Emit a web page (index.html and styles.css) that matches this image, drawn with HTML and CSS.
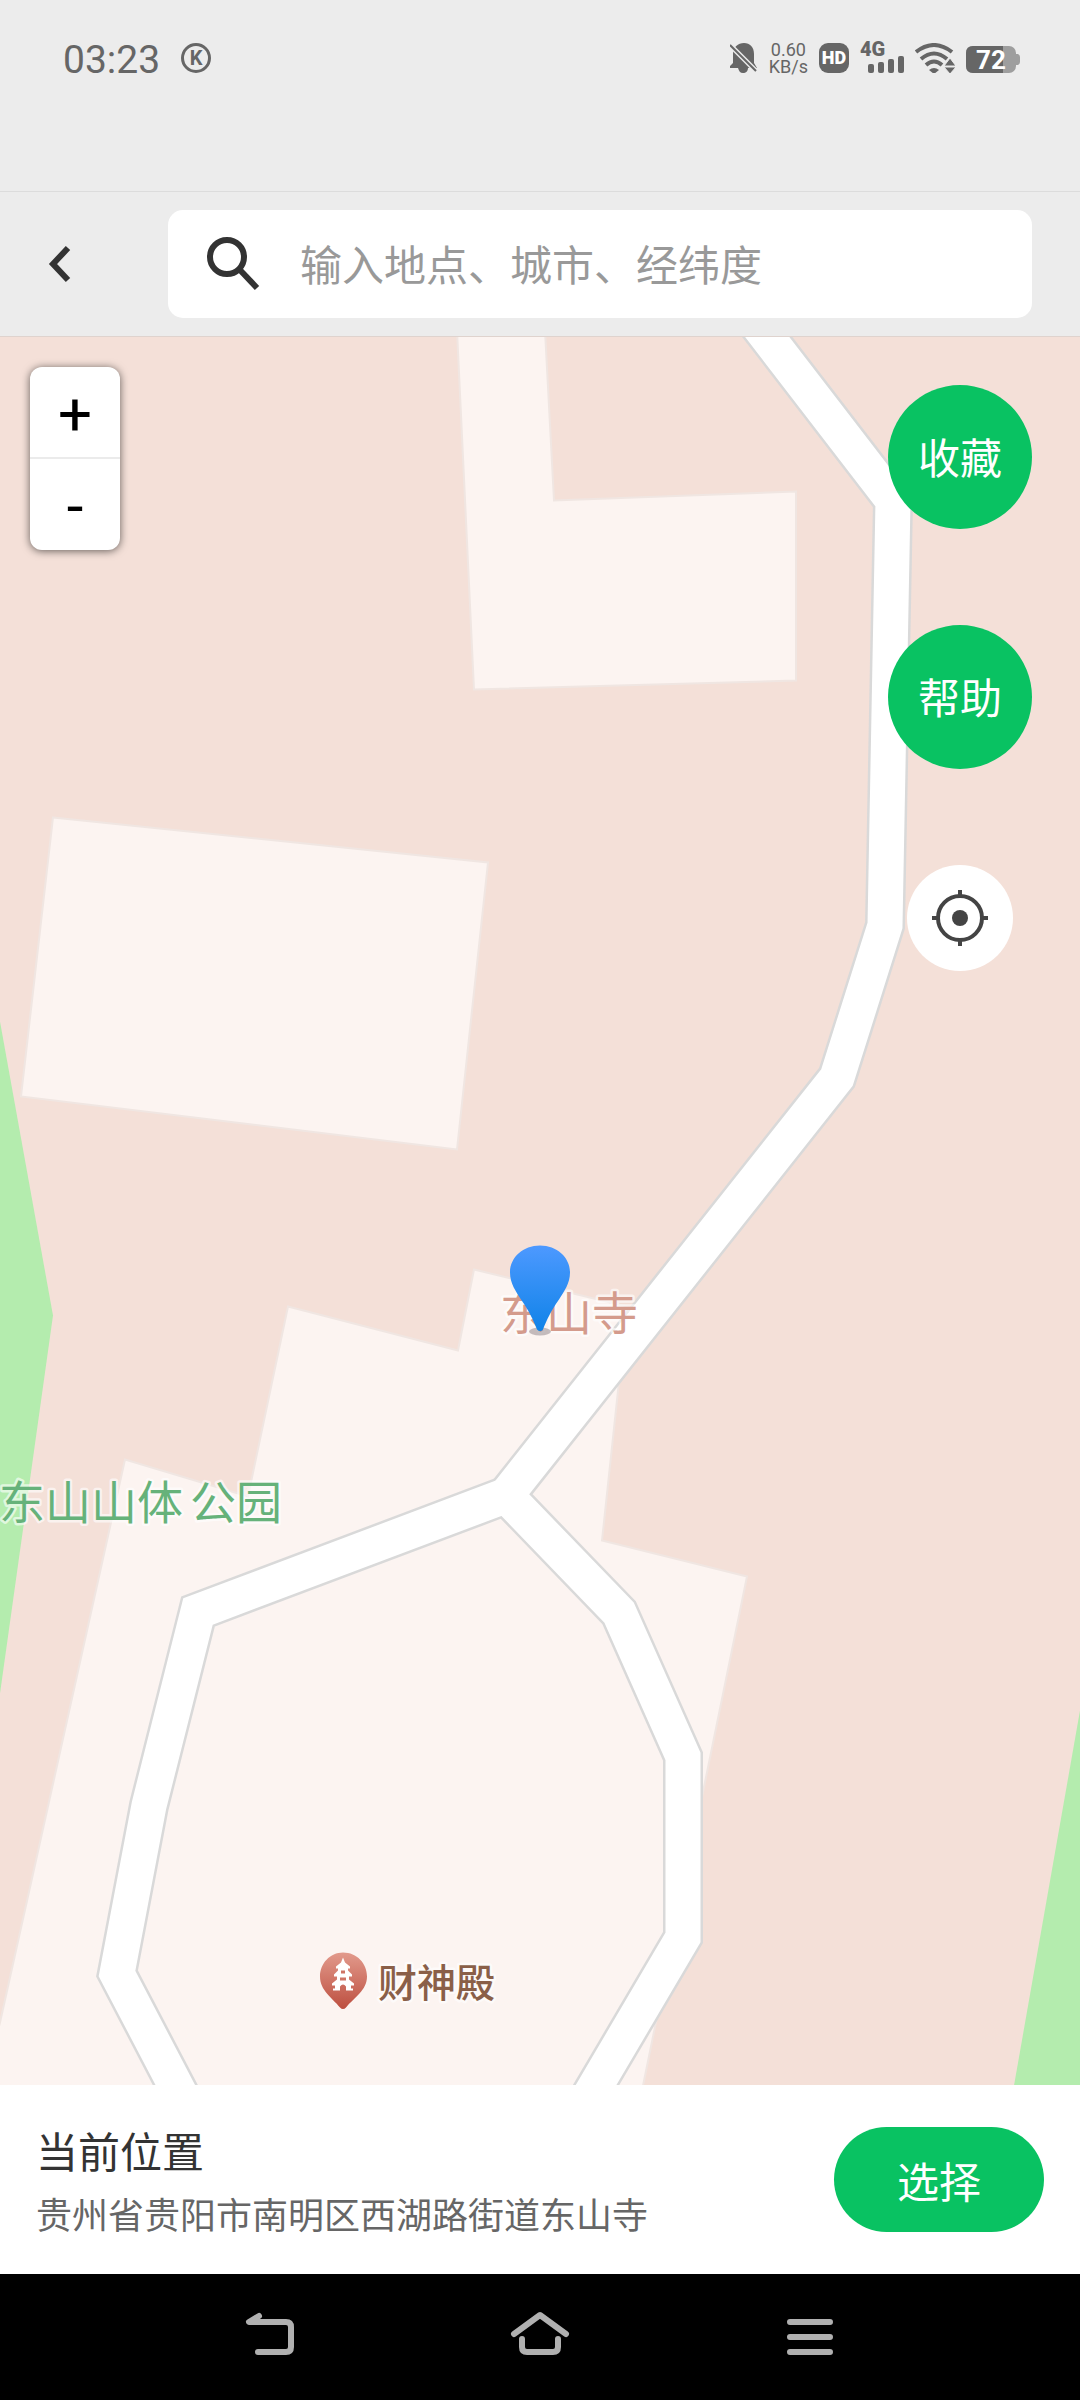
FILE: index.html
```html
<!DOCTYPE html>
<html lang="zh-CN">
<head>
  <meta charset="UTF-8" />
  <meta name="viewport" content="width=device-width, initial-scale=1.0" />
  <title>选择位置</title>
  <link rel="stylesheet" href="styles.css">
</head>
<body>
  <div class="status-bar">
    <span class="clock">03:23</span>
    <span class="app-badge">K</span>
    <div class="status-icons">
      <svg width="28" height="30" viewBox="0 0 28 30">
        <path fill="#666" d="M14 0C20 0 24 4 24 11V20L27 25H18C18 28 16 30 13 30S9 28 8 25H0V23L3 20V11C3 4 8 0 14 0Z"/>
        <path d="M-1 1L27 29" stroke="#ececec" stroke-width="5"/>
        <path d="M0 2L26 28" stroke="#666" stroke-width="2"/>
      </svg>
      <div class="speed"><span>0.60</span><span>KB/s</span></div>
      <span class="hd">HD</span>
      <div class="signal">
        <span>4G</span>
        <svg width="36" height="17" viewBox="0 0 36 17" fill="#666">
          <rect x="0" y="8" width="6" height="9" rx="2"/>
          <rect x="10" y="6" width="6" height="11" rx="2"/>
          <rect x="20" y="3" width="6" height="14" rx="2"/>
          <rect x="30" y="0" width="6" height="17" rx="2"/>
        </svg>
      </div>
      <svg width="40" height="30" viewBox="0 0 40 30">
        <g fill="none" stroke="#666" stroke-width="4">
          <path d="M1 9Q19 -5 37 9"/>
          <path d="M6 16Q19 5 32 16"/>
          <path d="M11 22Q19 15 27 22"/>
        </g>
        <path fill="#666" d="M14 27Q19 23 24 27L19 31Z"/>
        <path fill="#666" stroke="#ececec" stroke-width="1" d="M29 23L35 15L41 23ZM29 24H41L35 31Z"/>
      </svg>
      <div class="battery">
        <svg width="54" height="27" viewBox="0 0 54 27">
          <rect width="50" height="27" rx="7" fill="#9e9e9e"/>
          <path fill="#9e9e9e" d="M50 8H52Q54 9 54 11V16Q54 18 52 19H50Z"/>
          <path fill="#666" d="M7 0H37V27H7Q0 27 0 20V7Q0 0 7 0Z"/>
        </svg>
        <span>72</span>
      </div>
    </div>
  </div>

  <header class="search-bar">
    <button type="button" class="back" aria-label="返回">
      <svg width="24" height="40" viewBox="0 0 24 40"><path d="M20 4L5 20L20 36" fill="none" stroke="#333" stroke-width="6"/></svg>
    </button>
    <label class="search-box">
      <svg width="54" height="54" viewBox="0 0 54 54" fill="none" stroke="#333">
        <circle cx="21" cy="20" r="17" stroke-width="6"/>
        <path d="M34 33L51 51" stroke-width="6"/>
      </svg>
      <input type="text" placeholder="输入地点、城市、经纬度" aria-label="搜索">
    </label>
  </header>

  <main class="map">
    <svg class="map-canvas" viewBox="0 336 1080 1749" preserveAspectRatio="xMidYMid slice">
      <defs>
        <linearGradient id="pinFill" x1="0" y1="0" x2="0" y2="1">
          <stop offset="0" stop-color="#4d99ff"/>
          <stop offset="1" stop-color="#1083e8"/>
        </linearGradient>
        <linearGradient id="poiFill" x1="0" y1="0" x2="0" y2="1">
          <stop offset="0" stop-color="#e29a8c"/>
          <stop offset="1" stop-color="#bd4f40"/>
        </linearGradient>
      </defs>

      <!-- parks -->
      <g fill="#b4ecae">
        <polygon points="0,1021 53,1315 0,1693"/>
        <polygon points="1080,1710 1014,2085 1080,2085"/>
      </g>

      <!-- buildings -->
      <g fill="#fcf4f1" stroke="#f0e6e2" stroke-width="2">
        <polygon points="457,330 474,689 796,680 796,491 554,500 545,330"/>
        <polygon points="53,817 488,862 457,1149 21,1096"/>
        <polygon points="-4,2038 0,2022 125,1459 248,1496 288,1306 458,1350 474,1269 627,1306 602,1540 747,1576 642,2090 -4,2090"/>
      </g>

      <!-- roads -->
      <g fill="none" stroke="#d9d9d9" stroke-width="40">
        <path d="M743 305L893 500L885 925L837 1077L506 1495L619 1612L683 1756V1937L584 2105"/>
        <path d="M506 1495L198 1611L149 1805L117 1973L186 2105"/>
      </g>
      <g fill="none" stroke="#fff" stroke-width="35">
        <path d="M743 305L893 500L885 925L837 1077L506 1495L619 1612L683 1756V1937L584 2105"/>
        <path d="M506 1495L198 1611L149 1805L117 1973L186 2105"/>
      </g>

      <!-- labels -->
      <text class="label temple" x="500" y="1329">东山寺</text>
      <text class="label park" x="-1" y="1518">东山山体<tspan dx="7">公园</tspan></text>
      <text class="label poi" x="378" y="1996">财神殿</text>

      <!-- poi marker -->
      <path fill="url(#poiFill)" d="M343 1952C357 1952 367 1963 367 1976C367 1990 354 1997 346 2007Q343 2010 340 2007C332 1997 320 1990 320 1976C320 1963 330 1952 343 1952Z"/>
      <path fill="#fff" d="M343 1957L345 1962L350 1966V1968H348V1970L352 1974V1976H349V1979L354 1983V1985H351V1988H353V1990H346V1986Q343 1982 340 1986V1990H333V1988H335V1985H332V1983L337 1979V1976H334V1974L338 1970V1968H336V1966L341 1962Z"/>
      <path fill="#cf7465" d="M341 1970H345V1973H341ZM340 1977H346V1980H340Z"/>

      <!-- current position -->
      <ellipse cx="540" cy="1331" rx="11" ry="4" fill="#8b7f85" fill-opacity=".5"/>
      <path fill="url(#pinFill)" d="M540 1245C557 1245 570 1257 570 1272C570 1283 564 1291 559 1299C550 1312 547 1319 543 1329Q540 1332 537 1329C533 1319 530 1312 521 1299C516 1291 510 1283 510 1272C510 1257 523 1245 540 1245Z"/>
    </svg>

    <div class="zoom">
      <button type="button" aria-label="放大">+</button>
      <button type="button" aria-label="缩小">-</button>
    </div>

    <div class="tools">
      <button type="button" class="round">收藏</button>
      <button type="button" class="round">帮助</button>
      <button type="button" class="locate" aria-label="定位">
        <svg width="56" height="56" viewBox="0 0 56 56" fill="none" stroke="#444" stroke-width="4">
          <circle cx="28" cy="28" r="22"/>
          <circle cx="28" cy="28" r="8" fill="#444" stroke="none"/>
          <path d="M28 0V6M28 50V56M0 28H6M50 28H56"/>
        </svg>
      </button>
    </div>
  </main>

  <section class="place">
    <div class="place-text">
      <h2>当前位置</h2>
      <p>贵州省贵阳市南明区西湖路街道东山寺</p>
    </div>
    <button type="button" class="choose">选择</button>
  </section>

  <nav class="nav-bar">
    <button type="button" aria-label="返回">
      <svg width="60" height="48" viewBox="0 0 60 48"><path d="M19 3L9 9H46Q51 9 51 14V34Q51 39 46 39H18"/></svg>
    </button>
    <button type="button" aria-label="主页">
      <svg width="60" height="48" viewBox="0 0 60 48"><path d="M4 21L30 2L56 21M12 26V34Q12 39 17 39H43Q48 39 48 34V26"/></svg>
    </button>
    <button type="button" aria-label="最近任务">
      <svg width="60" height="48" viewBox="0 0 60 48"><path d="M10 9H50M10 24H50M10 39H50"/></svg>
    </button>
  </nav>
</body>
</html>
```
FILE: styles.css
```css
* {
  box-sizing: border-box;
}

body {
  margin: 0;
  min-height: 100vh;
  display: flex;
  flex-direction: column;
  background: #ececec;
  font-family: Roboto, "Noto Sans CJK SC", sans-serif;
  color: #333;
}

button {
  display: flex;
  align-items: center;
  justify-content: center;
  margin: 0;
  padding: 0;
  border: none;
  background: none;
  font-family: inherit;
  cursor: pointer;
}

svg {
  display: block;
}

/* status bar */
.status-bar {
  display: flex;
  align-items: center;
  height: 192px;
  padding: 0 60px 76px 63px;
  border-bottom: 1px solid #dcdcdc;
  color: #666;
}

.clock {
  padding-top: 4px;
  font-size: 39px;
  line-height: 40px;
}

.app-badge {
  display: flex;
  align-items: center;
  justify-content: center;
  width: 30px;
  height: 30px;
  margin-left: 21px;
  border: 3px solid #666;
  border-radius: 50%;
  font-size: 20px;
  font-weight: 700;
  line-height: 20px;
}

.status-icons {
  display: flex;
  align-items: center;
  gap: 11px;
  height: 30px;
  margin-left: auto;
}

.speed {
  display: flex;
  flex-direction: column;
  align-items: center;
  font-size: 18px;
  line-height: 17px;
}

.hd {
  width: 30px;
  height: 30px;
  border-radius: 9px;
  background: #666;
  color: #fff;
  font-size: 18px;
  font-weight: 900;
  line-height: 30px;
  text-align: center;
}

.signal {
  display: flex;
  flex-direction: column;
  width: 44px;
}

.signal span {
  height: 14px;
  font-size: 20px;
  font-weight: 900;
  line-height: 15px;
}

.signal svg {
  align-self: flex-end;
}

.battery {
  position: relative;
  align-self: flex-end;
}

.battery span {
  position: absolute;
  inset: 0 4px 0 0;
  color: #fff;
  font-size: 26px;
  font-weight: 700;
  line-height: 28px;
  text-align: center;
}

/* search */
.search-bar {
  display: flex;
  align-items: center;
  height: 144px;
  padding: 0 48px;
}

.back {
  width: 24px;
  height: 60px;
  margin-right: 96px;
}

.search-box {
  flex: 1;
  display: flex;
  align-items: center;
  height: 108px;
  padding: 0 38px;
  border-radius: 15px;
  background: #fff;
}

.search-box input {
  flex: 1;
  min-width: 0;
  margin-left: 40px;
  padding: 4px 0 0;
  border: none;
  outline: none;
  background: none;
  font-family: inherit;
  font-size: 42px;
  color: #333;
}

.search-box input::placeholder {
  color: #999;
}

/* map */
.map {
  position: relative;
  flex: 1;
  min-height: 700px;
  overflow: hidden;
  border-top: 1px solid #dfd3ce;
  background: #f4e0d8;
}

.map-canvas {
  position: absolute;
  inset: 0;
  width: 100%;
  height: 100%;
}

.label {
  paint-order: stroke;
  stroke: rgba(255, 255, 255, 0.6);
  stroke-width: 5px;
  stroke-linejoin: round;
}

.temple {
  font-size: 46px;
  fill: #d49b8c;
}

.park {
  font-size: 46px;
  fill: #66b27a;
}

.poi {
  font-size: 39px;
  font-weight: 500;
  fill: #8a5f48;
}

.zoom {
  position: absolute;
  top: 30px;
  left: 30px;
  width: 90px;
  border-radius: 12px;
  background: #fff;
  box-shadow: 0 1px 8px rgba(0, 0, 0, 0.6);
}

.zoom button {
  width: 90px;
  height: 90px;
  padding-top: 4px;
  font-size: 60px;
  color: #000;
}

.zoom button + button {
  height: 93px;
  border-top: 2px solid #ebebeb;
}

.tools {
  position: absolute;
  top: 48px;
  right: 48px;
  display: flex;
  flex-direction: column;
  align-items: center;
  gap: 96px;
}

.round {
  width: 144px;
  height: 144px;
  padding-bottom: 4px;
  border-radius: 50%;
  background: #09c262;
  color: #fff;
  font-size: 42px;
}

.locate {
  width: 106px;
  height: 106px;
  border-radius: 50%;
  background: #fff;
}

/* place panel */
.place {
  display: flex;
  align-items: center;
  justify-content: space-between;
  gap: 36px;
  min-height: 189px;
  padding: 0 36px;
  background: #fff;
}

.place-text {
  padding-top: 8px;
}

.place h2 {
  margin: 0;
  font-size: 42px;
  font-weight: 400;
  line-height: 66px;
}

.place p {
  margin: 0;
  font-size: 36px;
  line-height: 60px;
  color: #666;
}

.choose {
  flex: none;
  width: 210px;
  height: 105px;
  border-radius: 53px;
  background: #09c262;
  color: #fff;
  font-size: 42px;
}

/* system navigation */
.nav-bar {
  display: grid;
  grid-template-columns: repeat(3, 1fr);
  height: 126px;
  padding: 0 12.5%;
  background: #000;
}

.nav-bar svg {
  overflow: visible;
  fill: none;
  stroke: #b0b0b0;
  stroke-width: 6px;
  stroke-linecap: round;
  stroke-linejoin: round;
}
```
